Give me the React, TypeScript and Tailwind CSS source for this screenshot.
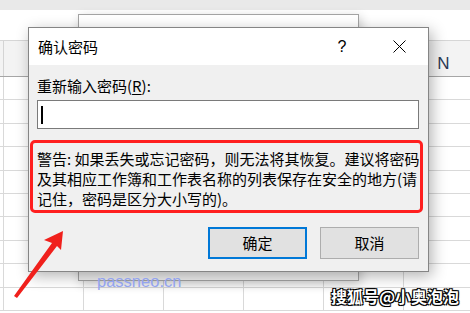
const cols = [0, 1, 2, 3, 4, 5]
const rows = Array.from({ length: 10 }, (_, i) => i)

const SheetBackground = () => {
    return (
        <div className="absolute inset-0 flex flex-col bg-white">
            <div className="h-[10px] shrink-0 bg-[#e9e9e9]"></div>
            <div className="h-[31px] shrink-0 border-b border-[#d6d6d6] bg-white"></div>
            <div className="h-[36px] shrink-0 flex pl-[3px] bg-[#f3f3f3] border-b border-[#a6a6a6]">
                {cols.map((c) => (
                    <div key={c} className="w-[80px] shrink-0 border-l border-[#d4d4d4] flex items-end justify-center pb-[1px]">
                        <span className="text-[17px] leading-[22px] text-[#2b3a55] font-['Liberation_Sans',sans-serif]">
                            {c === 5 ? 'N' : ''}
                        </span>
                    </div>
                ))}
            </div>
            {rows.map((r) => (
                <div key={r} className="h-[23.4px] shrink-0 flex pl-[3px] border-b border-[#d9d9d9]">
                    {cols.map((c) => (
                        <div key={c} className="w-[80px] shrink-0 border-l border-[#d9d9d9]"></div>
                    ))}
                </div>
            ))}
        </div>
    )
}

const CloseIcon = () => (
    <svg width="13" height="13" viewBox="0 0 13 13">
        <path d="M0.5 0.5 L12.5 12.5 M12.5 0.5 L0.5 12.5" stroke="#000" strokeWidth="1" />
    </svg>
)

const Arrow = () => (
    <svg className="absolute left-0 top-0" width="470" height="313" viewBox="0 0 470 313">
        <polygon points="63,231 44,240 52,243 14,296 17,298 57,246 61,250" fill="#f0201c" />
    </svg>
)

const App = () => {
    return (
        <div className="relative w-[470px] h-[313px] overflow-hidden font-['Noto_Sans_CJK_SC',sans-serif] text-black">
            <SheetBackground />

            {/* dialog behind */}
            <div className="absolute left-[78px] top-[14px] w-[281px] h-[267px] border border-[#a3a3a3] bg-[#f0f0f0] shadow-[2px_3px_10px_rgba(0,0,0,0.2)]">
                <div className="h-[14px] bg-white"></div>
            </div>

            {/* main dialog */}
            <div className="absolute left-[28px] top-[27px] w-[401px] h-[245px] flex flex-col border border-[#858585] bg-[#f0f0f0] shadow-[3px_4px_14px_rgba(0,0,0,0.3)]">
                <div className="h-[37px] shrink-0 bg-white flex items-center">
                    <span className="pl-[9px] text-[15px] leading-[20px]">确认密码</span>
                    <div className="flex-1"></div>
                    <div className="w-[46px] flex justify-center mr-[11px]">
                        <span className="text-[16px] leading-[20px] font-['Liberation_Sans',sans-serif]">?</span>
                    </div>
                    <div className="w-[46px] flex justify-center mr-[6px]">
                        <CloseIcon />
                    </div>
                </div>

                <div className="flex-1 flex flex-col pl-[8px] pt-[11px]">
                    <div className="text-[15px] leading-[20px]">
                        重新输入密码(<span className="underline underline-offset-2">R</span>):
                    </div>
                    <div className="mt-[4px] w-[382px] h-[29px] border border-[#7a7a7a] bg-white flex items-center pl-[3px]">
                        <div className="w-[2px] h-[18px] bg-black"></div>
                    </div>

                    <div className="mt-[11px] -ml-[7px] w-[393px] h-[73px] border-[3px] border-[#ff1f1f] rounded-[5px] pl-[4px] pt-[6px] text-[15px] leading-[20px] whitespace-nowrap">
                        <div>警告: 如果丢失或忘记密码，则无法将其恢复。建议将密码</div>
                        <div>及其相应工作簿和工作表名称的列表保存在安全的地方(请</div>
                        <div>记住，密码是区分大小写的)。</div>
                    </div>

                    <div className="mt-[14px] flex justify-end gap-[13px] w-[382px]">
                        <div className="w-[99px] h-[32px] border-2 border-[#0078d7] bg-[#e1e1e1] flex items-center justify-center text-[15px]">
                            确定
                        </div>
                        <div className="w-[99px] h-[32px] border border-[#adadad] bg-[#e1e1e1] flex items-center justify-center text-[15px]">
                            取消
                        </div>
                    </div>
                </div>
            </div>

            <Arrow />

            <div className="absolute left-[97px] top-[270px] text-[16.5px] leading-[22px] text-[#93a3ef] font-['Liberation_Sans',sans-serif]">
                passneo.cn
            </div>
            <div className="absolute left-[331px] top-[285px] text-[16px] leading-[22px] font-bold text-white [text-shadow:1px_1px_0_#000,-1px_-1px_0_#000,1px_-1px_0_#000,-1px_1px_0_#000,0_0_2px_#000]">
                搜狐号@小奥泡泡
            </div>
        </div>
    )
}

export default App
